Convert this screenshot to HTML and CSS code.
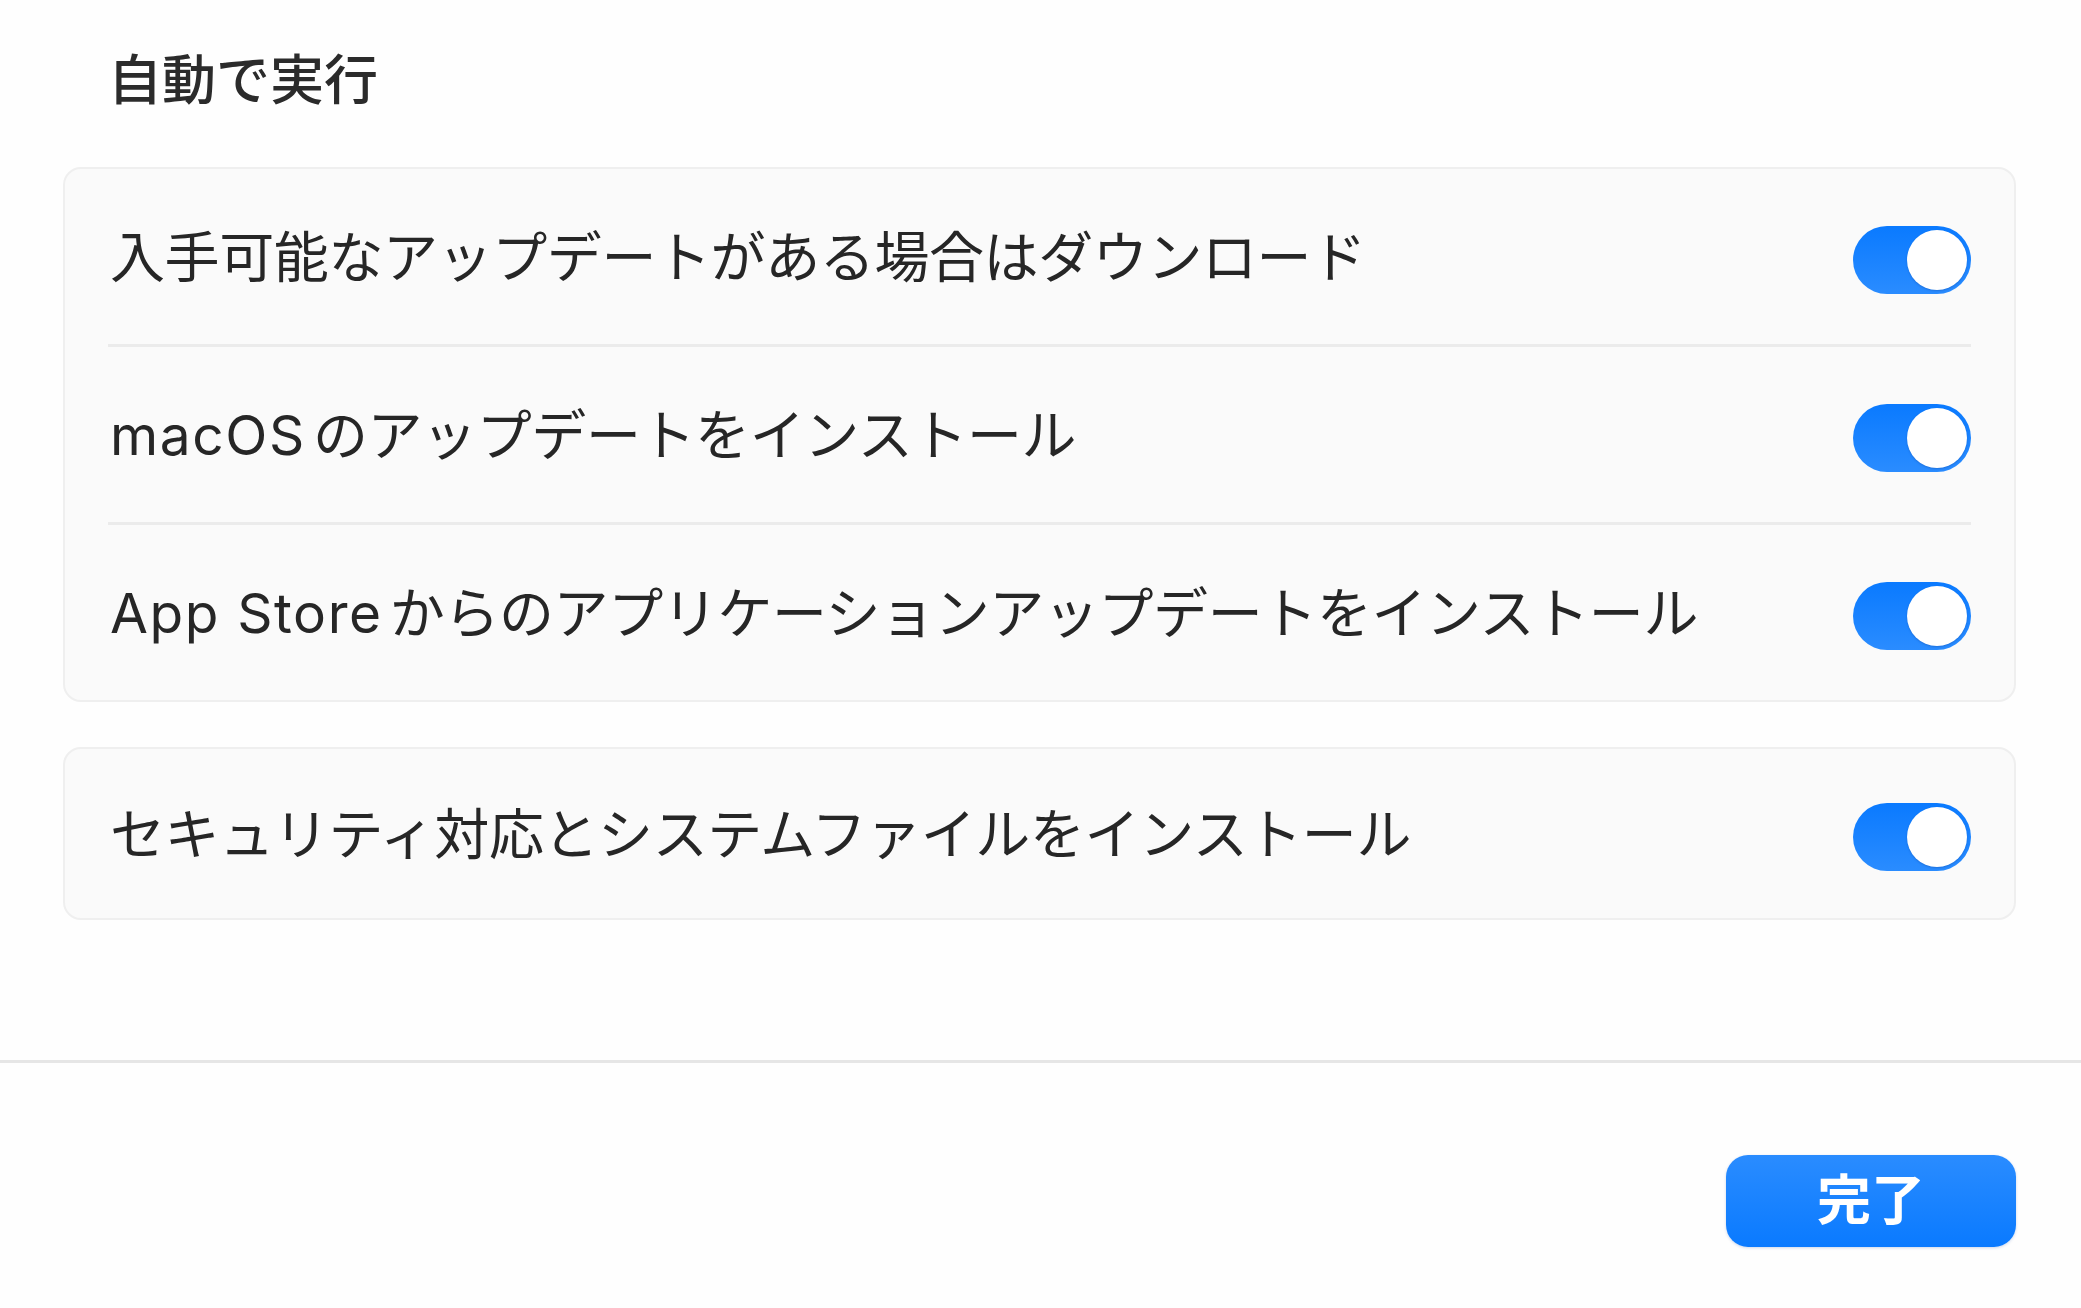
FILE: index.html
```html
<!DOCTYPE html>
<html lang="ja">
<head>
<meta charset="utf-8">
<title>自動で実行</title>
<link rel="stylesheet" href="styles.css">
</head>
<body>
<div class="sheet">
  <div class="main">
    <h1 class="title">自動で実行</h1>
    <section class="card">
      <div class="row">
        <span class="label">入手可能なアップデートがある場合はダウンロード</span>
        <span class="toggle on"><span class="knob"></span></span>
      </div>
      <div class="divider"></div>
      <div class="row">
        <span class="label"><span class="latin">macOS</span> のアップデートをインストール</span>
        <span class="toggle on"><span class="knob"></span></span>
      </div>
      <div class="divider"></div>
      <div class="row">
        <span class="label"><span class="latin">App Store</span> からのアプリケーションアップデートをインストール</span>
        <span class="toggle on"><span class="knob"></span></span>
      </div>
    </section>
    <section class="card card-single">
      <div class="row row-single">
        <span class="label">セキュリティ対応とシステムファイルをインストール</span>
        <span class="toggle on"><span class="knob"></span></span>
      </div>
    </section>
  </div>
  <div class="rule"></div>
  <div class="footer">
    <button class="done">完了</button>
  </div>
</div>
</body>
</html>
```

FILE: styles.css
```css
* {
  box-sizing: border-box;
}

html, body {
  margin: 0;
  padding: 0;
  background: #fefefe;
}

body {
  font-family: "Inter", "Noto Sans CJK JP", sans-serif;
  color: #262626;
  width: 2081px;
  height: 1308px;
  overflow: hidden;
}

.sheet {
  display: flex;
  flex-direction: column;
}

.main {
  display: flex;
  flex-direction: column;
  padding: 48px 65px 0 63px;
}

.title {
  margin: 0;
  padding-left: 45px;
  font-size: 54px;
  line-height: 65px;
  font-weight: 500;
  color: #2b2b2b;
}

.card {
  margin-top: 54px;
  background: #fafafa;
  border: 2px solid #efefef;
  border-radius: 18px;
  padding: 0 43px;
  display: flex;
  flex-direction: column;
}

.card-single {
  margin-top: 45px;
}

.row {
  height: 175px;
  display: flex;
  align-items: center;
  justify-content: space-between;
}

.row-single {
  height: 169px;
}

.label {
  font-size: 55px;
  line-height: 1.2;
  letter-spacing: -0.4px;
  word-spacing: -8px;
  padding-left: 2px;
  color: #262626;
}

.latin {
  letter-spacing: 1.6px;
  word-spacing: 0;
}

.divider {
  height: 3px;
  background: #ebebeb;
}

.toggle {
  position: relative;
  width: 118px;
  height: 68px;
  border-radius: 34px;
  background: linear-gradient(#0a7aff, #2a8cff);
  flex: none;
  margin-top: 6px;
}

.knob {
  position: absolute;
  top: 4px;
  right: 4px;
  width: 60px;
  height: 60px;
  border-radius: 50%;
  background: #ffffff;
  box-shadow: 0 1px 2px rgba(0, 40, 120, 0.25);
}

.rule {
  margin-top: 140px;
  height: 3px;
  background: #e6e6e6;
}

.footer {
  display: flex;
  justify-content: flex-end;
  padding: 92px 65px 0 0;
}

.done {
  width: 290px;
  height: 92px;
  border: none;
  border-radius: 22px;
  background: linear-gradient(#2a8cff, #0a7aff);
  color: #ffffff;
  font-family: "Inter", "Noto Sans CJK JP", sans-serif;
  font-size: 54px;
  font-weight: 600;
  line-height: 1;
  box-shadow: 0 1px 3px rgba(0, 60, 160, 0.2);
  padding: 0;
}
```
